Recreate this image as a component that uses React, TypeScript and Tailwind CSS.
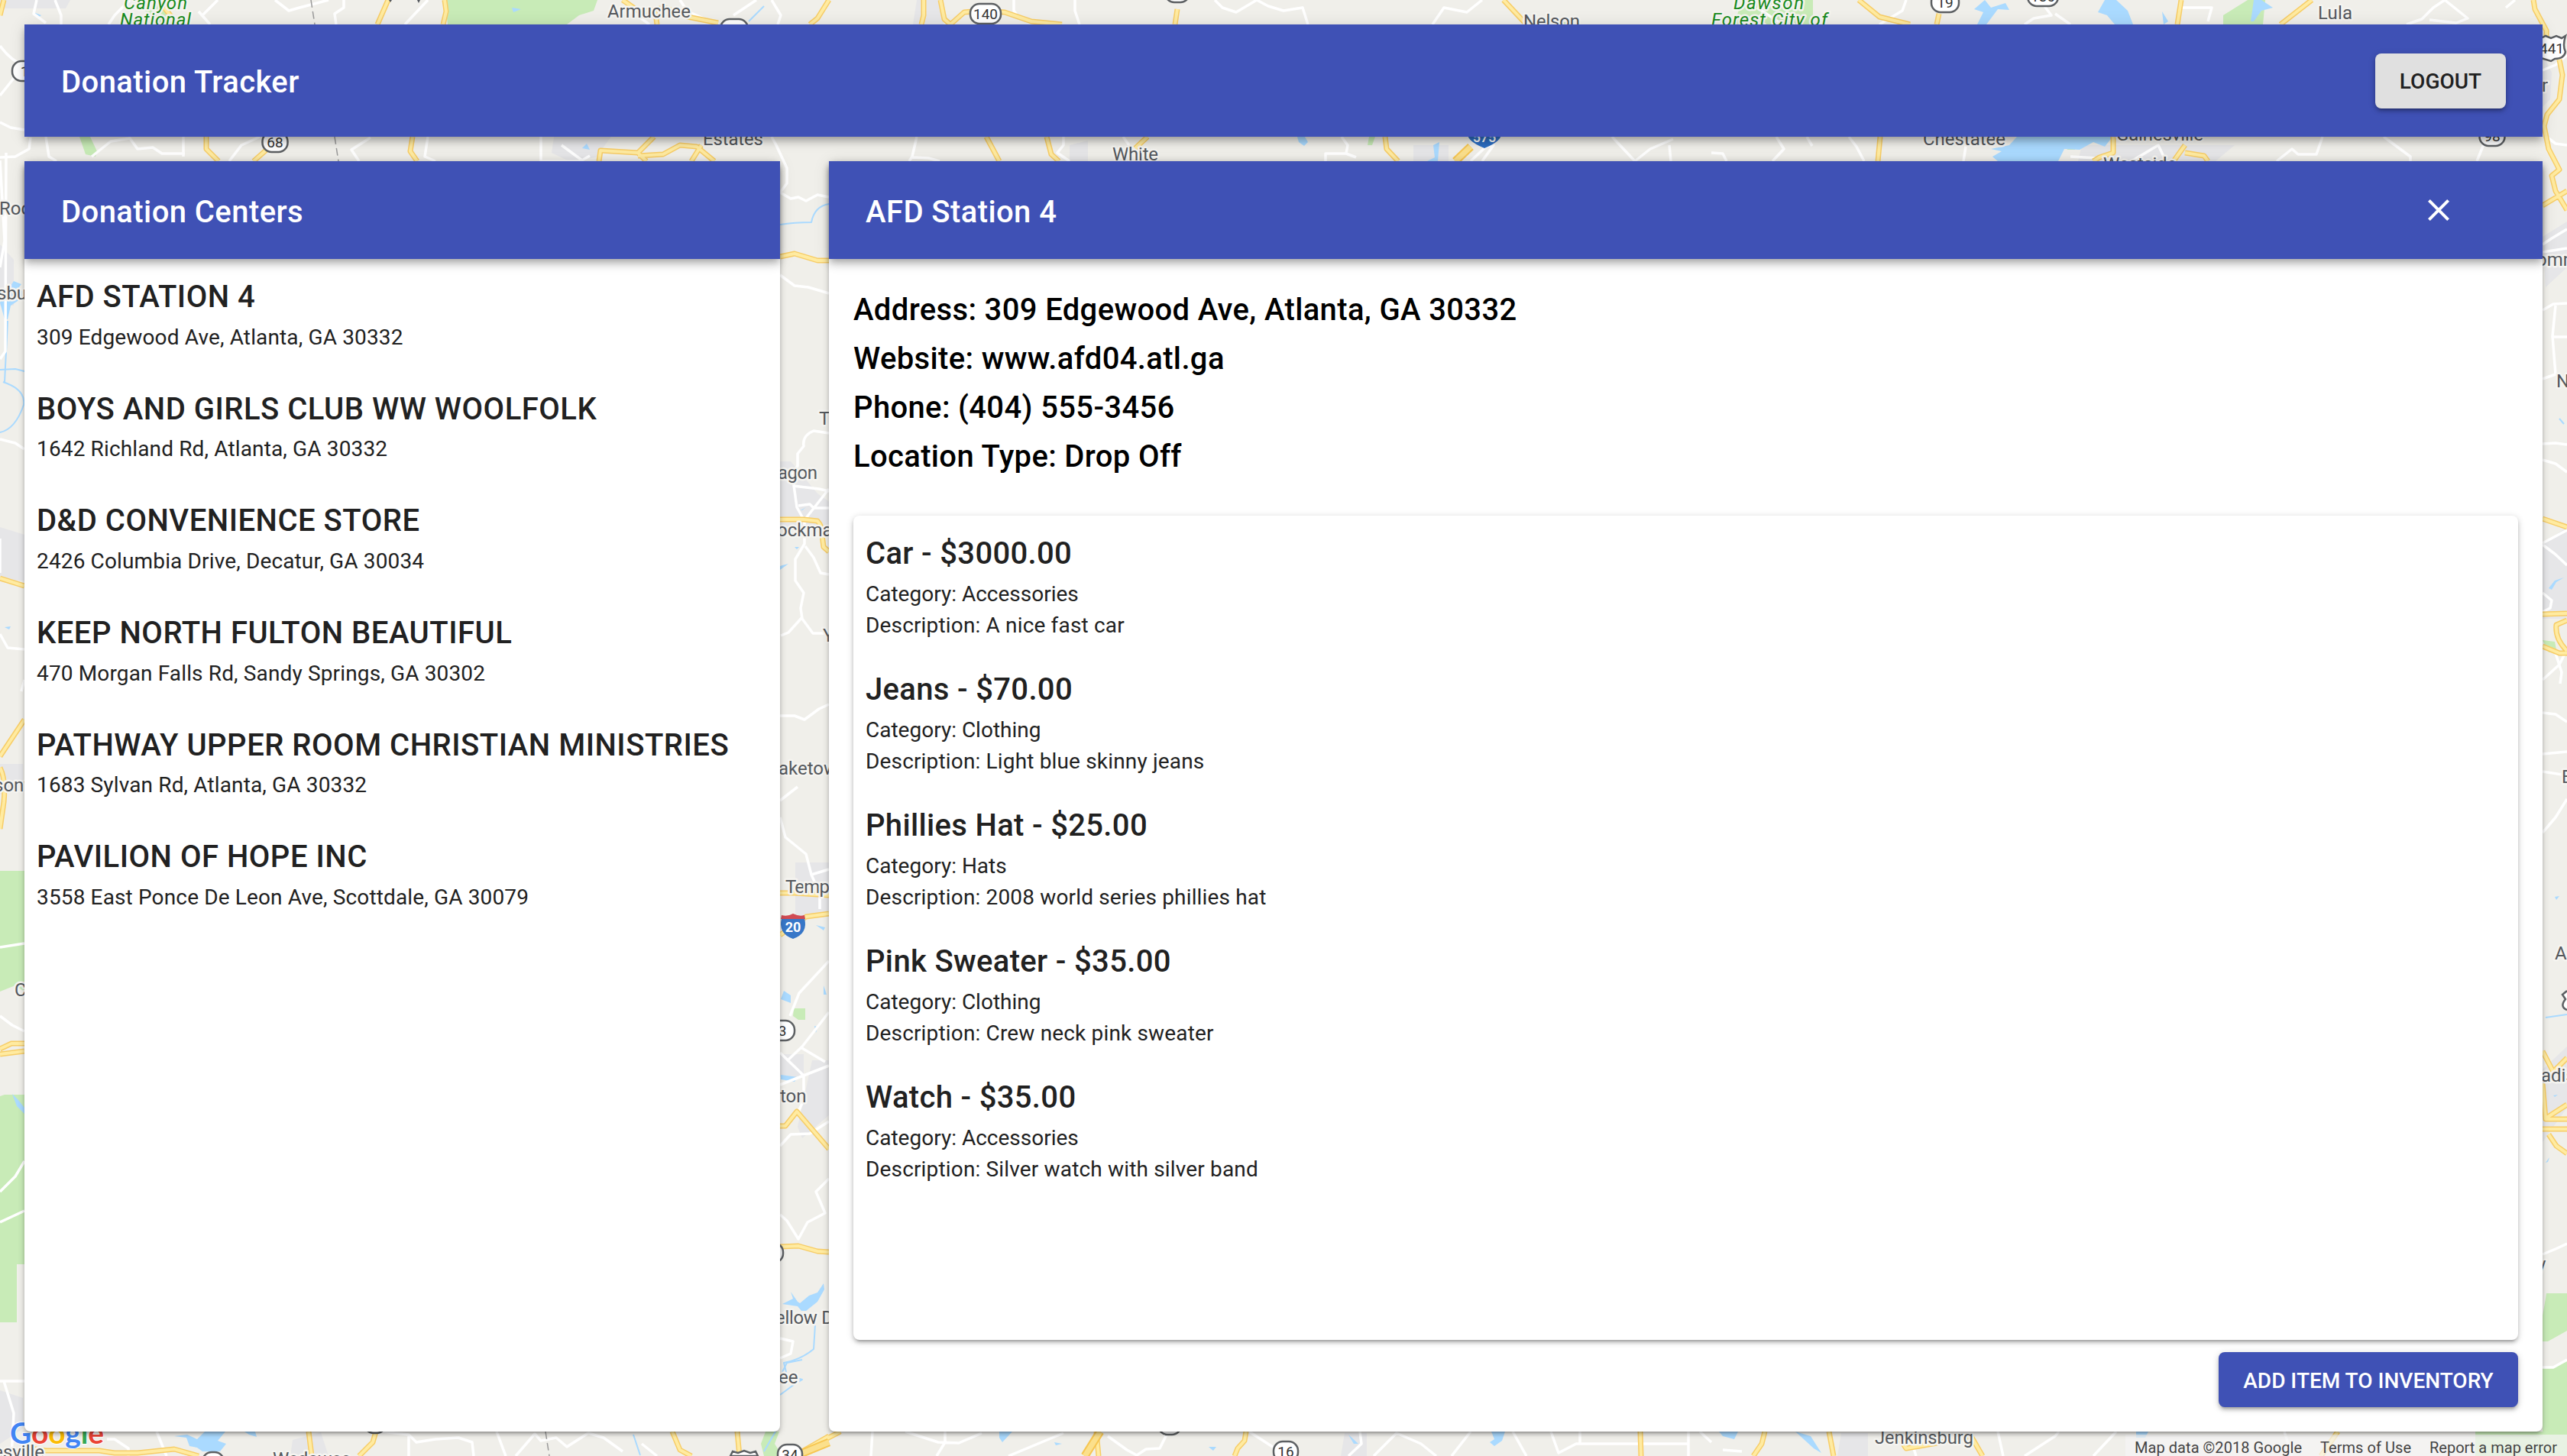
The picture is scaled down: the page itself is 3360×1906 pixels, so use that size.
import React from "react";

const centers = [
  ["AFD STATION 4", "309 Edgewood Ave, Atlanta, GA 30332"],
  ["BOYS AND GIRLS CLUB WW WOOLFOLK", "1642 Richland Rd, Atlanta, GA 30332"],
  ["D&D CONVENIENCE STORE", "2426 Columbia Drive, Decatur, GA 30034"],
  ["KEEP NORTH FULTON BEAUTIFUL", "470 Morgan Falls Rd, Sandy Springs, GA 30302"],
  ["PATHWAY UPPER ROOM CHRISTIAN MINISTRIES", "1683 Sylvan Rd, Atlanta, GA 30332"],
  ["PAVILION OF HOPE INC", "3558 East Ponce De Leon Ave, Scottdale, GA 30079"],
];

const details = [
  "Address: 309 Edgewood Ave, Atlanta, GA 30332",
  "Website: www.afd04.atl.ga",
  "Phone: (404) 555-3456",
  "Location Type: Drop Off",
];

const items = [
  ["Car - $3000.00", "Accessories", "A nice fast car"],
  ["Jeans - $70.00", "Clothing", "Light blue skinny jeans"],
  ["Phillies Hat - $25.00", "Hats", "2008 world series phillies hat"],
  ["Pink Sweater - $35.00", "Clothing", "Crew neck pink sweater"],
  ["Watch - $35.00", "Accessories", "Silver watch with silver band"],
];

const parks = [
  "M582 0H782L777 14L758 20L742 32H586Z",
  "M206 0H222L226 32H208L190 14Z",
  "M2280 0H2373V32H2270Z",
  "M2942 0H2965L2962 32H2910V20Z",
  "M104 179H118L127 198L125 205L112 202Z",
  "M2033 29H2053V32H2033Z",
  "M1792 179H1800L1796 190H1790Z",
  "M2706 187L2716 185V196H2706Z",
  "M0 1140H32V1298L20 1290L0 1298Z",
  "M6 1433H32V1655H22V1731H0V1435Z",
  "M1039 1320H1054V1335H1045L1038 1330Z",
  "M1002 1874H1020L1014 1890L1024 1906H1000L996 1890Z",
  "M3333 1693H3360V1742L3335 1756H3328V1722L3332 1700Z",
  "M3328 1790L3342 1790L3360 1782V1906H3240V1874H3328Z",
  "M3328 838L3344 840L3346 850L3336 854Z",
];

const urban = [
  "M0 0H92L86 11H0Z",
  "M725 179H800L780 206L745 211L722 200Z",
  "M1200 0H1235V32H1195Z",
  "M1400 190L1424 184V211H1400Z",
  "M1850 190H1896V211H1850Z",
  "M2725 190H2925L2900 211H2720Z",
  "M0 320L18 340V400H0Z",
  "M1010 604H1035L1070 646L1090 660V690L1060 700L1021 690Z",
  "M1041 1129H1085V1200H1041Z",
  "M1021 1380H1052V1410H1021Z M1063 1388H1085V1460L1050 1490L1044 1475Z",
  "M3328 310L3360 290V350L3332 376Z",
  "M3328 712L3360 690V810H3328Z",
  "M3328 1400L3360 1370V1450L3328 1495Z",
  "M3328 70L3340 95L3338 130L3328 140Z",
  "M0 690L32 700V760H0Z",
  "M0 1000H30V1030L0 1040Z",
  "M0 1820L30 1830V1870L0 1890Z",
  "M383 1885L420 1875L430 1906H380Z",
  "M1760 1876H1789V1906H1755Z",
  "M2410 1876H2445V1906H2405Z",
];

const water = [
  "M2640 179H2765L2755 192L2740 186L2722 196L2702 195L2694 211H2615L2608 205L2620 198L2606 195L2630 190Z",
  "M2598 0L2606 10L2625 4L2630 13L2615 12L2600 32H2588L2596 16L2584 12Z",
  "M2755 0H2770L2785 14L2792 32H2768L2758 20L2746 16Z",
  "M2830 15L2838 28L2832 32Z M2950 0H2960L2975 10L2960 14L2950 28H2946Z",
  "M228 1880L245 1878L258 1884L268 1874H295L285 1886L296 1890L288 1900H265L258 1895L248 1893L244 1882Z",
  "M320 1874H334L336 1881L326 1878Z",
  "M1698 179H1708L1712 186L1707 191L1700 186Z",
  "M1868 211L1878 206L1876 190L1884 186L1882 211Z",
  "M0 396L10 380L18 368L28 372L20 382L32 380V388L14 400L10 418H6Z",
  "M1047 1706L1059 1696L1070 1692L1078 1680L1079 1688L1070 1704L1055 1716H1049L1044 1710L1024 1707L1038 1700L1035 1691L1044 1704Z",
  "M1026 1297L1035 1303V1313L1022 1308Z M1022 1407L1044 1410L1040 1416L1022 1413Z",
  "M1068 1211L1080 1214L1078 1218Z M1078 1290L1082 1302L1078 1302Z M1066 1343L1070 1344L1068 1352Z",
  "M1012 744L1024 740L1032 738L1021 746Z M1048 668L1055 664L1050 668Z M1040 716H1046L1043 719Z",
  "M1952 1874H1970L1966 1886L1956 1893L1950 1888L1956 1884Z",
  "M1308 1874H1325L1312 1888L1308 1882Z M1380 1888L1390 1890L1382 1892Z",
  "M1765 1878L1778 1890L1772 1890Z M1582 1894H1592L1588 1899Z",
  "M2250 1874L2275 1874L2270 1884L2255 1880Z M2350 1874L2370 1880L2384 1902L2374 1896Z",
  "M2796 1874H2812L2808 1882H2796Z",
  "M44 16L54 20L50 23Z M670 10L682 12L672 16Z M768 188L772 196L762 194Z",
  "M3336 770L3344 760L3356 756L3346 762L3340 772Z M3344 1174L3350 1173L3346 1178Z M3342 1434L3348 1433L3344 1436Z M3332 1522L3337 1515L3335 1521Z",
  "M6 821L14 820L12 824Z M16 1432L24 1440L32 1450V1458L22 1448Z",
];

const streams = [
  "M0 484L20 483L32 486 M4 500Q34 510 31 530Q20 562 0 566",
  "M1021 294Q1040 291 1062 291Q1066 270 1085 267",
  "M1000 8L980 28",
  "M1068 1718L1065 1766Q1048 1780 1026 1784L1030 1800L1050 1806L1040 1812L1021 1826",
  "M1050 1780L1030 1784L1024 1796",
  "M829 1878L838 1905 M1015 1874L1000 1900",
  "M3332 1332L3360 1328 M3350 548L3356 555",
  "M32 268V278 M10 420L6 500",
];

const minor = [
  "M0 60Q15 80 32 86 M0 125L20 100L32 86 M0 160L14 167L32 170 M48 0L44 18L60 30 M72 0L80 20V32 M170 0L150 20L142 32",
  "M40 180L38 195L20 205L0 206 M60 179L64 205L74 211 M120 205L145 185L170 181L180 195L200 193L212 201H242",
  "M240 179V205 M300 211L316 190L340 179 M260 15L275 32 M265 20L285 0",
  "M360 0L378 14L392 10L430 0 M440 32L438 18L450 10V0 M560 0L530 32",
  "M470 211L460 196L485 180 M560 179L556 205L570 211 M708 179V211H760L772 204 M735 190L762 210 M1010 179L1016 190L1030 220V240L1021 252L1035 260L1045 258L1055 263L1070 255L1085 258",
  "M800 20L820 10L850 32 M890 0L900 15L940 32 M990 0L960 20 M1010 0L1022 20L1018 32",
  "M1327 0V14L1330 18 M1407 0V14L1413 32 M1590 0L1600 10L1618 16L1645 0L1660 8L1680 14L1705 10L1712 32 M1875 32L1890 10L1920 16L1940 0",
  "M1200 179L1194 205L1190 211 M1194 206L1215 207L1230 211 M1392 179V190L1384 200L1400 211 M1470 179L1478 190",
  "M1756 179L1764 190L1762 201H1735V211 M1762 201L1775 206 M1925 211L1945 192L1955 190L1940 211 M2110 179L2140 211L2160 195L2190 182 M2185 190L2187 211",
  "M2240 200L2255 201L2260 211 M2325 179L2335 195L2320 211 M2365 179L2372 191 M2420 179L2430 192L2440 211 M2575 179L2570 211",
  "M2300 10L2330 30 M2460 32L2490 14L2495 0 M2670 0L2685 20L2662 24L2650 32 M2690 18L2710 32 M2856 10H2895L2890 28",
  "M3150 32L3170 25L3185 10L3200 0L3230 24L3215 30L3180 26 M3280 10L3292 0 M2980 211L3000 195L3008 202H3032L3040 179 M3120 179L3155 205V211 M3255 179L3242 211",
  "M2790 211L2825 190L2835 211 M2710 205L2745 207 M1021 360L1040 374L1058 376L1085 384",
  "M3328 92L3345 85L3360 72 M3328 175L3345 188L3360 190 M3328 320L3340 312L3360 300 M3328 330L3360 325 M3328 406L3342 398L3360 397 M3345 400L3341 440L3345 490L3328 496 M3341 441H3360 M3328 581L3345 580L3360 582 M3328 602L3345 607L3360 618",
  "M3328 713L3344 725L3360 740 M3328 711L3360 694 M3328 776L3340 786L3338 796L3328 801 M3345 855L3353 880L3351 895 M3328 890L3350 870L3360 850",
  "M3328 933L3345 935L3360 945 M3328 987L3360 984 M3328 1010L3360 1015 M3328 1090L3345 1070L3360 1046 M3328 1642L3345 1635L3360 1628 M3328 1790H3342L3360 1780",
  "M1085 567L1065 564Q1050 570 1052 584L1044 594V610L1036 622 M1038 628L1043 664L1053 682V712L1041 732V760L1052 776L1048 796L1050 810L1064 829H1085 M1050 808L1032 828L1022 832 M1045 662L1060 660L1065 665L1085 665 M1052 682L1085 640",
  "M1038 636L1072 640L1085 643 M1054 715L1065 730L1074 750L1085 752 M1021 937H1040L1053 942L1072 928L1085 922",
  "M1021 1070L1028 1096L1055 1118L1062 1145L1085 1138 M1062 1145L1073 1170V1190 M1044 1030L1021 1048 M1085 1258L1046 1300L1034 1330 M1085 1325L1050 1370L1031 1388 M1048 1371L1080 1390 M1021 1378L1052 1408V1440L1045 1455 M1021 1420L1085 1395 M1021 1500L1035 1485L1060 1484L1085 1468",
  "M1085 1543L1068 1560L1080 1588L1057 1600L1045 1622L1030 1598L1021 1590 M1021 1752L1038 1756L1035 1772L1021 1778",
  "M0 210L6 315L0 350 M8 200L7 460L0 470 M0 575L20 580L32 588 M0 705V750 M0 830L10 848L32 850 M32 890L28 905 M0 1240L32 1235 M0 1330L16 1342L32 1350 M0 1560L20 1540L32 1520 M0 1600L32 1585 M0 1808H32 M5 1808L18 1850L15 1906",
  "M140 1884L150 1884L168 1896V1906 M205 1874L218 1906 M500 1874L535 1878L545 1888L570 1884L600 1882L618 1888L620 1906 M535 1880V1906 M650 1874L662 1906 M675 1906L700 1877L708 1886L728 1882L742 1894L770 1876L790 1882L815 1900 M840 1890L860 1906",
  "M1142 1874L1140 1906 M1185 1874L1228 1888L1255 1889L1285 1876 M1237 1874V1888L1226 1906 M1392 1876L1320 1906 M1450 1880L1475 1898L1488 1905L1500 1897L1518 1896L1528 1876 M1635 1874L1675 1900",
  "M1780 1874L1782 1890L1765 1906 M1798 1906L1828 1876L1860 1890L1880 1906 M1925 1874L1900 1906 M1980 1874L1998 1906 M2030 1874L2040 1902L2063 1890H2210 M2068 1890V1874 M2210 1874V1906 M2225 1874L2240 1888",
  "M2255 1898L2280 1900 M2500 1880L2508 1906 M2615 1874L2622 1906 M2650 1906L2690 1880L2695 1874 M2740 1906L2770 1874 M3000 1906L2990 1874",
];

const yellow = [
  "M0 20L5 0 M508 0L494 32 M582 0L584 15L580 32 M815 0L838 16L870 10L900 22L940 30 M857 10L860 32 M1085 0L1070 24L1060 32",
  "M215 10L226 24 M270 179V195L286 211 M350 195L332 211 M540 179L537 198L546 211 M784 211L786 197L835 200L856 179 M835 200L846 211 M835 204L868 202L890 190L912 192L935 211 M905 211L918 190",
  "M1209 0V20L1206 32 M1231 0L1236 25L1244 32L1262 16L1285 14L1315 16L1350 28L1390 32",
  "M1541 12L1538 32 M1968 0L1998 32 M2433 0L2460 22L2500 32 M2538 18L2535 32 M2855 0L2850 32 M3026 0L2985 32 M3316 0L3318 12L3333 40V70",
  "M1291 179L1308 211 M1370 179L1376 202L1386 211 M1502 179L1486 194 M1813 179L1815 195L1830 211 M2461 179L2458 211 M2766 179V200L2748 206L2740 211 M2860 190L2845 211 M2860 200L2885 204L2890 211",
  "M3350 78L3354 98L3350 130L3334 150L3330 165L3336 195L3350 222L3340 230L3345 250L3360 275 M3328 269L3360 250",
  "M3328 679L3360 690 M3328 804L3360 803 M3360 812L3346 818Q3344 836 3360 852 M3328 846L3350 855L3360 855",
  "M1021 336L1040 332L1070 341L1085 341 M1021 680H1052L1070 682Q1077 690 1076 700L1078 716L1085 722",
  "M1021 1169H1040L1085 1172 M1021 1224L1055 1200L1085 1196 M1021 1474H1028L1043 1455L1085 1504 M1021 1632L1045 1631L1070 1638L1085 1639",
  "M3328 1376L3342 1403L3360 1385 M3328 1418L3332 1465H3360 M3332 1464L3360 1446 M3328 1478H3360 M3336 1485L3346 1500L3360 1510",
  "M0 757L32 767 M32 942L8 978L0 990 M0 1005Q8 1020 5 1050L0 1085 M0 1373L15 1366H32 M0 1380L32 1376",
  "M0 1906L40 1896L60 1899H130L150 1902L180 1902L228 1897L260 1906 M404 1874L408 1906 M492 1874L488 1888L470 1906 M880 1874L890 1898L905 1906 M965 1874L968 1906 M1100 1874L1050 1900L1085 1880",
  "M1435 1874L1438 1906 M1631 1874L1629 1886L1620 1896L1616 1906 M2147 1874L2148 1906 M2310 1874L2306 1890L2295 1906 M2394 1874L2400 1906 M2480 1874L2495 1896L2530 1890L2580 1880L2595 1906 M3060 1874L3038 1906",
];

const highways = ["M1440 1874L1420 1906", "M1925 192L1905 211", "M1041 1906L1085 1888"];

type Label = { t: string; x: number; y: number; w?: number };
const labels: Label[] = [
  { t: "Armuchee", x: 795, y: 23, w: 109 },
  { t: "Nelson", x: 1994, y: 36, w: 74 },
  { t: "Lula", x: 3034, y: 25, w: 45 },
  { t: "Estates", x: 920, y: 190, w: 79 },
  { t: "White", x: 1456, y: 210, w: 60 },
  { t: "Chestatee", x: 2517, y: 190, w: 108 },
  { t: "Gainesville", x: 2770, y: 184, w: 114 },
  { t: "Westside", x: 2753, y: 223, w: 96 },
  { t: "Roc", x: -1, y: 281 },
  { t: "sbu", x: -4, y: 392 },
  { t: "sonv", x: -8, y: 1036 },
  { t: "C", x: 19, y: 1304 },
  { t: "T", x: 1072, y: 556 },
  { t: "agon", x: 1018, y: 627, w: 52 },
  { t: "ockma", x: 1017, y: 702 },
  { t: "Y", x: 1077, y: 840 },
  { t: "aketow", x: 1019, y: 1014 },
  { t: "Temp", x: 1028, y: 1169, w: 58 },
  { t: "ton", x: 1021, y: 1443 },
  { t: "ellow D", x: 1015, y: 1733, w: 76 },
  { t: "ee", x: 1019, y: 1811 },
  { t: "r", x: 3327, y: 120 },
  { t: "omm", x: 3320, y: 348 },
  { t: "N", x: 3346, y: 507 },
  { t: "E", x: 3353, y: 1025 },
  { t: "A", x: 3344, y: 1256 },
  { t: "adis", x: 3326, y: 1416 },
  { t: "y", x: 3321, y: 1663 },
  { t: "Jenkinsburg", x: 2454, y: 1890, w: 129 },
  { t: "Wedowee", x: 357, y: 1918, w: 102 },
  { t: "nesville", x: -22, y: 1909, w: 80 },
];

const shields = [
  { t: "140", x: 1290, y: 18, w: 40 },
  { t: "", x: 961, y: 38, w: 36 },
  { t: "1", x: 32, y: 93, w: 32 },
  { t: "68", x: 360, y: 186, w: 33 },
  { t: "", x: 1541, y: -10, w: 32 },
  { t: "19", x: 2546, y: 3, w: 36 },
  { t: "136", x: 2674, y: -5, w: 40 },
  { t: "98", x: 3262, y: 178, w: 33 },
  { t: "3", x: 1024, y: 1349, w: 32 },
  { t: "", x: 1010, y: 1640, w: 30 },
  { t: "34", x: 1034, y: 1904, w: 32 },
  { t: "16", x: 1683, y: 1900, w: 32 },
  { t: "", x: 1531, y: 1865, w: 30 },
  { t: "", x: 279, y: 1914, w: 28 },
  { t: "", x: 491, y: 1863, w: 28 },
];

const labelStroke = {
  stroke: "#f5f4f0",
  strokeWidth: 5,
  strokeLinejoin: "round" as const,
  paintOrder: "stroke",
};

function MapCanvas() {
  return (
    <svg className="absolute inset-0" width="3360" height="1906" viewBox="0 0 3360 1906" fontFamily="Roboto, sans-serif">
      <rect width="3360" height="1906" fill="#f0efea" />
      <g fill="#e6e6e8">{urban.map((d) => <path key={d} d={d} />)}</g>
      <g fill="#c8ebb7">{parks.map((d) => <path key={d} d={d} />)}</g>
      <g fill="#aadaff">{water.map((d) => <path key={d} d={d} />)}</g>
      <g fill="none" strokeLinejoin="round">
        <g stroke="#aadaff" strokeWidth="2">{streams.map((d) => <path key={d} d={d} />)}</g>
        <g stroke="#ffffff" strokeWidth="3.5">{minor.map((d) => <path key={d} d={d} />)}</g>
        <path d="M407 0L412 32 M438 179L443 211 M714 1874L719 1906" stroke="#9a9a9a" strokeWidth="1.5" strokeDasharray="10 5" />
        <g stroke="#f7cd67" strokeWidth="7">{yellow.map((d) => <path key={d} d={d} />)}</g>
        <g stroke="#ffeba1" strokeWidth="4">{yellow.map((d) => <path key={d} d={d} />)}</g>
        <g stroke="#f6c652" strokeWidth="11">{highways.map((d) => <path key={d} d={d} />)}</g>
        <g stroke="#fbe08c" strokeWidth="7">{highways.map((d) => <path key={d} d={d} />)}</g>
      </g>
      <g fontSize="24" fill="#54585d" {...labelStroke}>
        {labels.map((l) => (
          <text key={l.t + l.x} x={l.x} y={l.y} textLength={l.w}>{l.t}</text>
        ))}
      </g>
      <path d="M509 0H513L511 3Z M546 0H550L548 4Z" fill="#54585d" />
      <g fontSize="24" fontStyle="italic" fill="#188a1c" {...labelStroke}>
        <text x="162" y="12" textLength="83">Canyon</text>
        <text x="157" y="34" textLength="93">National</text>
        <text x="2269" y="12" textLength="92">Dawson</text>
        <text x="2240" y="34" textLength="152">Forest City of</text>
      </g>
      {shields.map((s) => (
        <g key={s.t + s.x}>
          <rect x={s.x - s.w / 2} y={s.y - 13} width={s.w} height="26" rx="12" fill="#fff" stroke="#5d6063" strokeWidth="2.5" />
          <text x={s.x} y={s.y + 7} fontSize="19" textAnchor="middle" fill="#333">{s.t}</text>
        </g>
      ))}
      <path d="M3326 50L3332 47L3339 50L3346 47L3353 50L3358 47Q3354 60 3358 68Q3356 77 3344 77L3339 80L3326 76Z" fill="#fff" stroke="#5d6063" strokeWidth="2.5" />
      <text x="3340" y="70" fontSize="19" textAnchor="middle" fill="#333">441</text>
      <path d="M3360 1297L3354 1302L3358 1308Q3350 1318 3360 1322" fill="#fff" stroke="#5d6063" strokeWidth="2.5" />
      <path d="M956 1906L959 1900L966 1902L974 1899L982 1902L989 1900L992 1906Z" fill="#fff" stroke="#5d6063" strokeWidth="2.5" />
      <path d="M1921 172H1965Q1968 184 1943 194Q1918 184 1921 172Z" fill="#2d6ec2" />
      <text x="1943" y="186" fontSize="18" fontWeight="500" textAnchor="middle" fill="#fff">575</text>
      <path d="M1023 1202H1053Q1058 1222 1038 1229Q1018 1222 1023 1202Z" fill="#3777c8" />
      <path d="M1023 1198Q1031 1200 1038 1196Q1046 1200 1053 1198L1054 1203H1022Z" fill="#d14b52" />
      <text x="1038" y="1220" fontSize="18" fontWeight="700" textAnchor="middle" fill="#fff">20</text>
      <text x="13" y="1890" fontSize="39" fontWeight="700" fontFamily="Lato, sans-serif" textLength="123" stroke="#fff" strokeWidth="2" paintOrder="stroke">
        <tspan fill="#4285f4">G</tspan><tspan fill="#ea4335">o</tspan><tspan fill="#fbbc05">o</tspan>
        <tspan fill="#4285f4">g</tspan><tspan fill="#34a853">l</tspan><tspan fill="#ea4335">e</tspan>
      </text>
      <rect x="2782" y="1878" width="578" height="28" fill="#f5f5f5" fillOpacity="0.7" />
      <g fontSize="20" fill="#444">
        <text x="2794" y="1902" textLength="219">Map data ©2018 Google</text>
        <text x="3037" y="1902" textLength="119">Terms of Use</text>
        <text x="3180" y="1902" textLength="167">Report a map error</text>
      </g>
    </svg>
  );
}

const barShadow = "shadow-[0_4px_8px_-2px_rgba(0,0,0,0.2),0_8px_10px_0_rgba(0,0,0,0.14),0_2px_20px_0_rgba(0,0,0,0.12)]";
const paperShadow = "shadow-[0_2px_10px_0_rgba(0,0,0,0.2),0_4px_4px_0_rgba(0,0,0,0.14),0_6px_2px_-4px_rgba(0,0,0,0.12)]";
const barTitle = "pt-1 text-[40px] font-medium leading-[47px] tracking-[0.42px] text-white";

export default function App() {
  return (
    <div className="relative h-[1906px] w-[3360px] overflow-hidden font-[Roboto,sans-serif] text-[28px] leading-[41px] text-[#212121]">
      <MapCanvas />
      <div className="relative flex h-full flex-col gap-8 p-8">
        <header className={`flex h-[147px] shrink-0 items-center justify-between bg-[#3f51b5] px-12 ${barShadow}`}>
          <h1 className={barTitle}>Donation Tracker</h1>
          <button className={`h-[72px] w-[171px] rounded-lg bg-[#e0e0e0] pt-0.5 font-medium ${paperShadow}`}>LOGOUT</button>
        </header>
        <main className="flex h-[1663px] gap-16">
          <section className={`flex w-[989px] flex-col rounded-lg bg-white ${paperShadow}`}>
            <div className={`flex h-32 shrink-0 items-center bg-[#3f51b5] px-12 ${barShadow}`}>
              <h2 className={barTitle}>Donation Centers</h2>
            </div>
            <ul className="px-4 pt-[27px]">
              {centers.map(([name, address]) => (
                <li key={name} className="h-[146.7px]">
                  <h3 className="mb-2 whitespace-nowrap text-[40px] font-medium leading-[46.7px] tracking-[0.5px]">{name}</h3>
                  <p className="tracking-[0.14px]">{address}</p>
                </li>
              ))}
            </ul>
          </section>
          <section className={`flex min-w-0 flex-1 flex-col rounded-lg bg-white ${paperShadow}`}>
            <div className={`flex h-32 shrink-0 items-center justify-between bg-[#3f51b5] pr-[112px] pl-12 ${barShadow}`}>
              <h2 className={barTitle}>AFD Station 4</h2>
              <svg width="48" height="48" viewBox="0 0 24 24" fill="#fff">
                <path d="M19 6.41L17.59 5 12 10.59 6.41 5 5 6.41 10.59 12 5 17.59 6.41 19 12 13.41 17.59 19 19 17.59 13.41 12z" />
              </svg>
            </div>
            <div className="flex flex-1 flex-col px-8 pt-[35px] pb-8">
              <div className="h-[301px] text-[40px] font-medium leading-[64px] tracking-[0.35px] text-black">
                {details.map((d) => <p key={d}>{d}</p>)}
              </div>
              <ul className={`flex-1 rounded-lg bg-white px-4 pt-[27px] ${paperShadow}`}>
                {items.map(([name, category, description]) => (
                  <li key={name} className="h-[178px]">
                    <h3 className="mb-2 text-[40px] font-medium leading-[46.7px] tracking-[0.33px]">{name}</h3>
                    <p>Category: {category}</p>
                    <p className="tracking-[0.16px]">Description: {description}</p>
                  </li>
                ))}
              </ul>
              <button className={`mt-4 h-[72px] w-[392px] shrink-0 self-end rounded-lg bg-[#3f51b5] pt-0.5 font-medium text-white ${paperShadow}`}>
                ADD ITEM TO INVENTORY
              </button>
            </div>
          </section>
        </main>
      </div>
    </div>
  );
}
